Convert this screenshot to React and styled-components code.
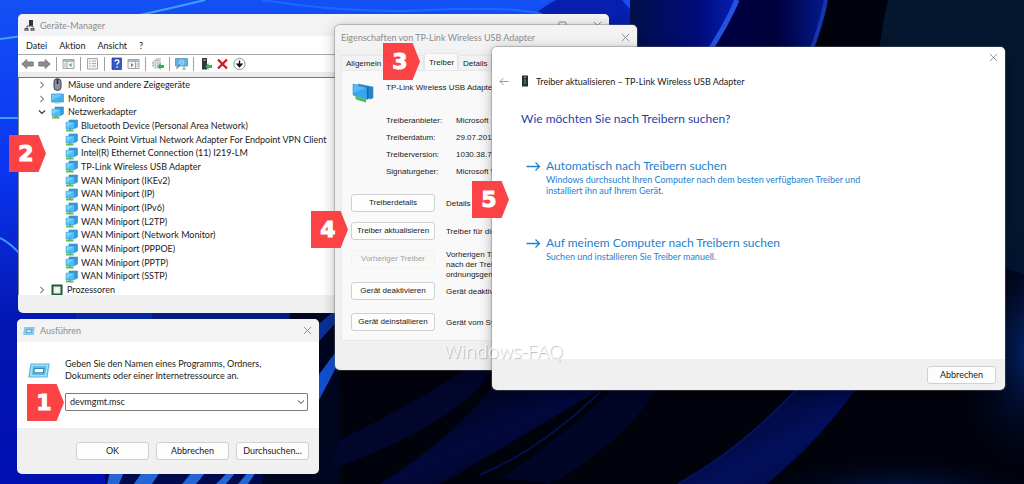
import { useState } from 'react';
import styled, { createGlobalStyle } from 'styled-components';

const GlobalStyle = createGlobalStyle`
  * {
    box-sizing: border-box;
  }
  body {
    margin: 0;
    background: #00041c;
    font-family: Lato, 'Noto Sans', sans-serif;
    font-size: 9px;
    font-variant-ligatures: none;
    color: #1a1a1a;
  }
  button, select {
    font: inherit;
    font-variant-ligatures: none;
    color: inherit;
  }
`;

const ADAPTERS = [
  'Bluetooth Device (Personal Area Network)',
  'Check Point Virtual Network Adapter For Endpoint VPN Client',
  'Intel(R) Ethernet Connection (11) I219-LM',
  'TP-Link Wireless USB Adapter',
  'WAN Miniport (IKEv2)',
  'WAN Miniport (IP)',
  'WAN Miniport (IPv6)',
  'WAN Miniport (L2TP)',
  'WAN Miniport (Network Monitor)',
  'WAN Miniport (PPPOE)',
  'WAN Miniport (PPTP)',
  'WAN Miniport (SSTP)',
];

const DRIVER_FIELDS = [
  ['Treiberanbieter:', 'Microsoft'],
  ['Treiberdatum:', '29.07.2017'],
  ['Treiberversion:', '1030.38.712.2019'],
  ['Signaturgeber:', 'Microsoft Windows'],
];

const DRIVER_ACTIONS = [
  { label: 'Treiberdetails', lines: ['Details'], height: 28 },
  { label: 'Treiber aktualisieren', lines: ['Treiber für dieses Gerät'], height: 28 },
  {
    label: 'Vorheriger Treiber',
    lines: ['Vorherigen Treiber', 'nach der Treiber', 'ordnungsgemäß'],
    height: 32,
    disabled: true,
  },
  { label: 'Gerät deaktivieren', lines: ['Gerät deaktivieren'], height: 31 },
  { label: 'Gerät deinstallieren', lines: ['Gerät vom System'], height: 18 },
];

const SEARCH_OPTIONS = [
  {
    title: 'Automatisch nach Treibern suchen',
    lines: [
      'Windows durchsucht Ihren Computer nach dem besten verfügbaren Treiber und',
      'installiert ihn auf Ihrem Gerät.',
    ],
  },
  {
    title: 'Auf meinem Computer nach Treibern suchen',
    lines: ['Suchen und installieren Sie Treiber manuell.'],
  },
];

const STEPS = [
  { num: 1, left: 27, top: 384 },
  { num: 2, left: 9, top: 135 },
  { num: 3, left: 383, top: 43 },
  { num: 4, left: 311, top: 211 },
  { num: 5, left: 472, top: 181 },
];

/* ---------- icons ---------- */

const NetworkIcon = ({ size = 13 }) => (
  <svg width={size} height={size} viewBox="0 0 13 13" aria-hidden="true">
    <path d="M1 11.500h7.500M5 9v2.500" stroke="#5cba5e" strokeWidth="2" />
    <path d="M4 1h8.500v7L11 9H4z" fill="#2f9be0" stroke="#3f86b8" strokeWidth=".6" />
    <path d="M1 3.200h8.600v6.500H1z" fill="#4dbdf5" stroke="#3a97cd" strokeWidth=".6" />
    <path d="M1.400 3.600h7.800L1.400 8.500z" fill="#8adcff" opacity=".7" />
  </svg>
);

const BigNetworkIcon = () => (
  <svg width="24" height="22" viewBox="0 0 24 22" aria-hidden="true">
    <path d="M4 14l11 3.500v3L5 17.500z" fill="#45c24c" />
    <path d="M7 2l15 3v11l-3 1L7 12z" fill="#1f86cf" stroke="#2b79b5" strokeWidth=".5" />
    <path d="M2 2l14 3.500v12L2 13z" fill="#35a7ec" stroke="#2683bf" strokeWidth=".5" />
    <path d="M2.500 2.800l12 3.200-12 5z" fill="#64c4f8" opacity=".7" />
    <path d="M16 5.500l1.500-.5v11.500l-1.500 1z" fill="#176ba8" />
  </svg>
);

const MonitorIcon = () => (
  <svg width="13" height="11" viewBox="0 0 13 11" aria-hidden="true">
    <path d="M.6 1h11.800v8H.6z" fill="#41b2ef" stroke="#4596c6" strokeWidth=".8" />
    <path d="M1 1.400h11L1 7.500z" fill="#83d5fb" opacity=".6" />
    <path d="M4 10h5" stroke="#9fc3d9" />
  </svg>
);

const MouseIcon = () => (
  <svg width="13" height="13" viewBox="0 0 13 13" aria-hidden="true">
    <rect x="3" y=".8" width="7" height="11.500" rx="3" fill="#8b90a0" stroke="#3c404c" />
    <path d="M6.500 1v5" stroke="#262a35" strokeWidth="1.600" />
  </svg>
);

const ChipIcon = () => (
  <svg width="12" height="12" viewBox="0 0 12 12" aria-hidden="true">
    <rect x="1.500" y="1.500" width="9" height="9" fill="#eef3ee" stroke="#245a38" strokeWidth="2" />
    <rect x="4" y="4" width="4" height="4" fill="#fff" stroke="#d3e0d6" strokeWidth=".6" />
  </svg>
);

const ManagerIcon = () => (
  <svg width="11" height="13" viewBox="0 0 11 13" aria-hidden="true">
    <path d="M5 1h4v6H5z" fill="#333" />
    <path d="M3 7h6v1.500M3 7v2" stroke="#555" fill="none" />
    <path d="M.5 9h4v3h-4zM6.500 9h4v3h-4z" fill="#555" />
    <path d="M1.500 11h2M7.500 11h2" stroke="#ccc" />
  </svg>
);

const UsbIcon = () => (
  <svg width="8" height="12" viewBox="0 0 8 12" aria-hidden="true">
    <path d="M1 .5h6v11H1z" fill="#27302d" />
    <path d="M3 1.500h2v1.500H3z" fill="#7e8a85" />
    <path d="M3 4h2v5H3z" fill="#3b6e4c" />
  </svg>
);

const RunIcon = ({ width = 12 }) => (
  <svg width={width} height={Math.round(width * 0.7)} viewBox="0 0 22 15" aria-hidden="true">
    <path d="M3 1h18l-2 13H1z" fill="#a4dcf6" stroke="#5cb2dc" strokeWidth="1.200" />
    <path d="M5 3h13.500l-1.500 9H4z" fill="#5cbbe8" />
    <path d="M6.500 5.500h9.500l-.8 4.200H5.800z" fill="#fff" stroke="#2e86bd" strokeWidth="1.100" />
  </svg>
);

const CloseIcon = () => (
  <svg width="9" height="9" viewBox="0 0 9 9" aria-hidden="true">
    <path d="M.8.8l7.400 7.400M8.200.8L.8 8.200" stroke="#8a8a8a" strokeWidth=".9" />
  </svg>
);

const SquareIcon = () => (
  <svg width="9" height="9" viewBox="0 0 9 9" aria-hidden="true">
    <rect x="1" y="1" width="7" height="7" rx="1" fill="none" stroke="#8a8a8a" />
  </svg>
);

const ArrowIcon = () => (
  <svg width="15" height="11" viewBox="0 0 15 11" aria-hidden="true">
    <path d="M.5 5.500h13M9.500 1.500l4 4-4 4" fill="none" stroke="#1c83d2" strokeWidth="1.300" />
  </svg>
);

const BackIcon = () => (
  <svg width="10" height="9" viewBox="0 0 10 9" aria-hidden="true">
    <path d="M9.500 4.500H1M4.500 1L1 4.500 4.500 8" fill="none" stroke="#999" />
  </svg>
);

const Chevron = ({ open, light }) => (
  <svg width="8" height="8" viewBox="0 0 8 8" aria-hidden="true">
    <path
      d={open ? 'M1 2.500l3 3 3-3' : 'M2.500 1l3 3-3 3'}
      fill="none"
      stroke={open && !light ? '#333' : '#888'}
      strokeWidth="1.100"
    />
  </svg>
);

const toolShapes = {
  Zurück: (
    <path d="M.8 7l5-4.500V5h6.400v4H5.800v2.500z" fill="#8d8d8d" stroke="#6e6e6e" strokeWidth=".8" />
  ),
  Vorwärts: (
    <path d="M12.200 7l-5-4.500V5H.8v4h6.400v2.500z" fill="#8d8d8d" stroke="#6e6e6e" strokeWidth=".8" />
  ),
  Konsolenstruktur: (
    <>
      <path d="M1 2.500h11v9H1z" fill="#f5f5f5" stroke="#a5a5a5" />
      <path d="M1 4h11" stroke="#9aa4ae" strokeWidth="1.500" />
      <path d="M5 4.500v7" stroke="#a5a5a5" />
      <path d="M9.500 6v4L7 8z" fill="#3ea54a" />
      <path d="M2 7h2M2 9h2" stroke="#b0b0b0" />
    </>
  ),
  Eigenschaften: (
    <>
      <path d="M1.500 1.500h10v10.500h-10z" fill="#f4f4f2" stroke="#a5a5a5" />
      <path d="M3 4h1.500M3 6.500h1.500M3 9h1.500M6 4h4M6 6.500h4M6 9h4" stroke="#a3aca5" />
    </>
  ),
  Hilfe: (
    <>
      <path d="M2 1h9.500v11.500H2z" fill="#3558c4" stroke="#22358e" strokeWidth=".7" />
      <path d="M5 4.500c0-2 4-2 4 0 0 1.500-2 1.400-2 3.200M7 9.200v1.500" fill="none" stroke="#fff" strokeWidth="1.300" />
    </>
  ),
  Aktionsbereich: (
    <>
      <path d="M1 2.500h11v9H1z" fill="#f5f5f5" stroke="#a5a5a5" />
      <path d="M1 4h11" stroke="#9aa4ae" strokeWidth="1.500" />
      <path d="M8.500 4.500v7" stroke="#a5a5a5" />
      <path d="M4 6v4l2.500-2z" fill="#3ea54a" />
      <path d="M9.500 7h2M9.500 9h2" stroke="#b0b0b0" />
    </>
  ),
  Aktualisieren: (
    <>
      <path d="M5 1h5v3H5z" fill="#d4d4d4" />
      <circle cx="5.500" cy="7" r="3.800" fill="#e9e9e9" stroke="#adadad" strokeWidth="1.500" strokeDasharray="2 1" />
      <circle cx="5.500" cy="7" r="1.500" fill="#fff" stroke="#aaa" />
      <path d="M6.500 9.500l3-3.500v2H13v3H9.500v2z" fill="#2fb45a" />
    </>
  ),
  Gerätesuche: (
    <>
      <path d="M.5 1.500h12v7.500H.5z" fill="#58b4e6" stroke="#6f9fba" />
      <path d="M7 12h4M9 9v3" stroke="#8b98a1" />
      <circle cx="6.500" cy="5.500" r="2.500" fill="#7cc8f0" stroke="#9dd4f1" />
      <path d="M5 7.500l-3.500 4" stroke="#77838b" strokeWidth="1.300" />
    </>
  ),
  Treiber: (
    <>
      <path d="M3 1h5v11.500H3z" fill="#333a38" />
      <path d="M4.500 2h2v2h-2z" fill="#8d9693" />
      <path d="M6.500 9.500l3-3.500v2H13v3H9.500v2z" fill="#2fb45a" />
    </>
  ),
  Deinstallieren: <path d="M2 2.500l9 9M11 2.500l-9 9" stroke="#d61420" strokeWidth="2.300" />,
  Deaktivieren: (
    <>
      <circle cx="6.500" cy="7" r="5.600" fill="#fff" stroke="#777" strokeWidth=".8" />
      <path d="M6.500 3.500v6M4.300 7.300l2.200 2.400 2.200-2.400z" stroke="#111" strokeWidth="1.400" fill="#111" />
    </>
  ),
};

const TOOL_GROUPS = [
  ['Zurück', 'Vorwärts'],
  ['Konsolenstruktur'],
  ['Eigenschaften'],
  ['Hilfe', 'Aktionsbereich'],
  ['Aktualisieren'],
  ['Gerätesuche'],
  ['Treiber', 'Deinstallieren', 'Deaktivieren'],
];

const Wallpaper = () => (
  <WallpaperSvg viewBox="0 0 1024 484" preserveAspectRatio="none" aria-hidden="true">
    <defs>
      <linearGradient id="sky" x1="0" y1="0" x2="0" y2="1">
        <stop offset="0" stopColor="#1450f4" />
        <stop offset=".35" stopColor="#0a35f0" />
        <stop offset=".68" stopColor="#0316ae" />
        <stop offset="1" stopColor="#0010b4" />
      </linearGradient>
      <linearGradient id="petal" x1="0" y1="0" x2="1" y2="0">
        <stop offset="0" stopColor="#00104a" />
        <stop offset=".6" stopColor="#000a78" />
        <stop offset="1" stopColor="#0620b4" />
      </linearGradient>
      <linearGradient id="petalDark" x1="0" y1="0" x2="1" y2="0">
        <stop offset="0" stopColor="#000048" />
        <stop offset=".6" stopColor="#00003c" />
        <stop offset="1" stopColor="#041a90" />
      </linearGradient>
      <linearGradient id="band" x1="0" y1="0" x2="1" y2="1">
        <stop offset="0" stopColor="#00020f" />
        <stop offset=".5" stopColor="#02083c" />
        <stop offset="1" stopColor="#00020c" />
      </linearGradient>
      <linearGradient id="bandBlue" x1="0" y1="0" x2="1" y2="1">
        <stop offset="0" stopColor="#000210" />
        <stop offset=".6" stopColor="#020f5c" />
        <stop offset="1" stopColor="#010a38" />
      </linearGradient>
      <radialGradient id="glow">
        <stop offset="0" stopColor="#052468" />
        <stop offset="1" stopColor="#00041c" stopOpacity="0" />
      </radialGradient>
    </defs>
    <path d="M0 0h1024v484H0z" fill="#00020c" />
    <path d="M0 0h630v200H330v284H0z" fill="url(#sky)" />
    <path d="M535 14Q575-20 622 0l12 14v30H535z" fill="#061fae" />
    <path d="M630 0h109L700 70h-70z" fill="url(#petal)" />
    <path d="M739 0h88l-25 70H700z" fill="url(#petalDark)" />
    <path d="M737 0Q726 26 706 56" stroke="#2452e0" strokeWidth="5" fill="none" />
    <path d="M826 0Q821 26 809 56" stroke="#1534b4" strokeWidth="4" fill="none" />
    <path d="M888 0Q882 24 878 60L1005 160V268l19 6V0z" fill="#04172f" />
    <ellipse cx="1030" cy="350" rx="80" ry="130" fill="url(#glow)" />
    <ellipse cx="900" cy="500" rx="150" ry="45" fill="url(#glow)" />
    <path d="M0 39Q90 28 205 0" stroke="#40a0ff" strokeWidth="2" fill="none" />
    <path d="M262 0Q350 14 430 10T542 14" stroke="#1d68ff" strokeWidth="2" fill="none" />
    <path d="M0 118h18" stroke="#3e9cff" strokeWidth="2" />
    <path d="M0 238Q14 245 26 262" stroke="#389bff" strokeWidth="2" fill="none" />
    <path d="M76 313h76v8H76z" fill="#0628a4" />
    <path d="M152 313h140v8H152z" fill="#031c80" />
    <path d="M105 470h225v14H105z" fill="#010a4c" />
    <path
      d="M107 484l3-12h14l-5 12zM134 484l8-12h18l-8 12zM182 484l10-12h14l-10 12zM216 484l12-12h8l-10 12zM238 484l10-12h8l-8 12z"
      fill="#2465d8"
    />
    <path d="M290 313h50v171H262z" fill="#010620" />
    <path d="M300 340l40-34v12l-36 40z" fill="#0b2f96" />
    <path d="M312 384L340 346v14L318 402z" fill="#124fcf" />
    <path d="M340 440Q420 400 480 360h18Q470 420 330 470z" fill="#01062a" />
    <path d="M380 484Q450 440 492 388h110Q500 450 440 484z" fill="url(#band)" />
    <path d="M480 475Q540 450 600 392" stroke="#050f4c" strokeWidth="2" fill="none" />
    <path d="M550 484Q620 446 660 386h-44Q560 440 500 478z" fill="#010526" />
    <path d="M678 484Q740 450 800 386h58Q820 440 767 484z" fill="url(#bandBlue)" />
    <path d="M678 484Q740 450 800 386" stroke="#07125c" strokeWidth="2" fill="none" />
  </WallpaperSvg>
);

/* ---------- windows ---------- */

const DeviceManager = () => (
  <Window $left={18} $right={415} $top={14}>
    <TitleBar $height={22}>
      <ManagerIcon />
      <WindowTitle>Geräte-Manager</WindowTitle>
      <WindowControls>
        <IconButton aria-label="Maximieren">
          <SquareIcon />
        </IconButton>
        <IconButton aria-label="Schließen">
          <CloseIcon />
        </IconButton>
      </WindowControls>
    </TitleBar>
    <MenuBar>
      {['Datei', 'Aktion', 'Ansicht', '?'].map((item) => (
        <MenuItem key={item}>{item}</MenuItem>
      ))}
    </MenuBar>
    <Toolbar>
      {TOOL_GROUPS.map((group, idx) => (
        <ToolGroup key={idx}>
          {group.map((name) => (
            <IconButton key={name} aria-label={name}>
              <svg width="13" height="14" viewBox="0 0 13 14" aria-hidden="true">
                {toolShapes[name]}
              </svg>
            </IconButton>
          ))}
        </ToolGroup>
      ))}
    </Toolbar>
    <TreePane>
      <Tree>
        <TreeRow>
          <Chevron />
          <MouseIcon />
          Mäuse und andere Zeigegeräte
        </TreeRow>
        <TreeRow>
          <Chevron />
          <MonitorIcon />
          Monitore
        </TreeRow>
        <TreeRow>
          <Chevron open />
          <NetworkIcon />
          Netzwerkadapter
        </TreeRow>
        {ADAPTERS.map((name) => (
          <TreeRow key={name} $child>
            <NetworkIcon />
            {name}
          </TreeRow>
        ))}
        <TreeRow>
          <Chevron />
          <ChipIcon />
          Prozessoren
        </TreeRow>
      </Tree>
    </TreePane>
    <StatusBar />
  </Window>
);

const RunDialog = () => {
  const [command, setCommand] = useState('devmgmt.msc');

  return (
    <Window $left={17} $right={705} $top={319}>
      <TitleBar $height={23}>
        <RunIcon />
        <WindowTitle>Ausführen</WindowTitle>
        <WindowControls>
          <IconButton aria-label="Schließen">
            <CloseIcon />
          </IconButton>
        </WindowControls>
      </TitleBar>
      <RunBody>
        <RunIcon width={22} />
        <RunForm>
          <label htmlFor="command">
            Geben Sie den Namen eines Programms, Ordners,
            <br />
            Dokuments oder einer Internetressource an.
          </label>
          <SelectWrap>
            <CommandSelect id="command" value={command} onChange={(e) => setCommand(e.target.value)}>
              <option>devmgmt.msc</option>
            </CommandSelect>
            <Chevron open light />
          </SelectWrap>
        </RunForm>
      </RunBody>
      <RunFooter>
        {['OK', 'Abbrechen', 'Durchsuchen...'].map((label) => (
          <PushButton key={label} $width={73}>
            {label}
          </PushButton>
        ))}
      </RunFooter>
    </Window>
  );
};

const PropertiesDialog = () => (
  <Window $left={335} $right={387} $top={25} $shadow>
    <TitleBar $height={24} $plain>
      <WindowTitle>Eigenschaften von TP-Link Wireless USB Adapter</WindowTitle>
      <WindowControls>
        <IconButton aria-label="Schließen">
          <CloseIcon />
        </IconButton>
      </WindowControls>
    </TitleBar>
    <Classic>
      <TabList role="tablist">
        <Tab role="tab" $wide>
          Allgemein
        </Tab>
        <Tab role="tab" $active aria-selected="true">
          Treiber
        </Tab>
        <Tab role="tab">Details</Tab>
      </TabList>
      <TabPanel role="tabpanel">
        <DeviceHead>
          <BigNetworkIcon />
          TP-Link Wireless USB Adapter
        </DeviceHead>
        <FieldList>
          {DRIVER_FIELDS.map(([name, value]) => (
            <Field key={name}>
              <dt>{name}</dt>
              <dd>{value}</dd>
            </Field>
          ))}
        </FieldList>
        {DRIVER_ACTIONS.map((action) => (
          <ActionRow key={action.label} $height={action.height}>
            <PushButton $width={84} disabled={action.disabled}>
              {action.label}
            </PushButton>
            <ActionText $multi={action.lines.length > 1}>
              {action.lines.map((line) => (
                <span key={line}>{line}</span>
              ))}
            </ActionText>
          </ActionRow>
        ))}
      </TabPanel>
    </Classic>
  </Window>
);

const UpdateDialog = () => (
  <Window $left={492} $right={19} $top={47} $shadow>
    <WizardBody>
      <WizardTop>
        <IconButton aria-label="Schließen">
          <CloseIcon />
        </IconButton>
      </WizardTop>
      <WizardHeader>
        <IconButton aria-label="Zurück">
          <BackIcon />
        </IconButton>
        <UsbIcon />
        <span>Treiber aktualisieren – TP-Link Wireless USB Adapter</span>
      </WizardHeader>
      <Question>Wie möchten Sie nach Treibern suchen?</Question>
      <Options>
        {SEARCH_OPTIONS.map((option) => (
          <Option key={option.title}>
            <ArrowIcon />
            <span>
              <OptionTitle>{option.title}</OptionTitle>
              {option.lines.map((line) => (
                <OptionLine key={line}>{line}</OptionLine>
              ))}
            </span>
          </Option>
        ))}
      </Options>
    </WizardBody>
    <WizardFooter>
      <PushButton $width={69}>Abbrechen</PushButton>
    </WizardFooter>
  </Window>
);

const App = () => {
  return (
    <>
      <GlobalStyle />
      <Desktop>
        <Wallpaper />
        <DeviceManager />
        <RunDialog />
        <PropertiesDialog />
        <UpdateDialog />
        <Watermark>Windows-FAQ</Watermark>
        {STEPS.map((step) => (
          <StepBadge key={step.num} $left={step.left} $top={step.top}>
            {step.num}
          </StepBadge>
        ))}
      </Desktop>
    </>
  );
};

export default App;

const Desktop = styled.main`
  position: relative;
  min-height: 100vh;
  overflow: hidden;
`;

const WallpaperSvg = styled.svg`
  position: absolute;
  inset: 0;
  width: 100%;
  height: 100%;
`;

const Window = styled.section`
  position: absolute;
  left: ${({ $left }) => $left}px;
  right: ${({ $right }) => $right}px;
  top: ${({ $top }) => $top}px;
  overflow: hidden;
  border-radius: 5px;
  background-color: #f0f0f0;
  white-space: nowrap;
  box-shadow: ${({ $shadow }) =>
    $shadow ? '0 0 1px 1px rgba(110, 110, 110, 0.4), 0 3px 14px rgba(0, 0, 0, 0.3)' : '0 0 1px rgba(60, 60, 60, 0.6)'};
`;

const TitleBar = styled.header`
  display: flex;
  align-items: center;
  gap: ${({ $plain }) => ($plain ? 0 : 5)}px;
  height: ${({ $height }) => $height}px;
  padding: 0 7px 0 6px;
  background-color: #f3f3f3;
`;

const WindowTitle = styled.h2`
  margin: 0;
  font-size: 9px;
  font-weight: 400;
  color: #8c8c8c;
`;

const WindowControls = styled.div`
  display: flex;
  gap: 26px;
  margin-left: auto;
`;

const IconButton = styled.button`
  display: flex;
  align-items: center;
  justify-content: center;
  padding: 0;
  border: 0;
  background: none;
`;

const MenuBar = styled.nav`
  display: flex;
  align-items: center;
  gap: 12px;
  height: 18px;
  padding: 0 8px;
  background-color: #fff;
`;

const MenuItem = styled.button`
  padding: 0;
  border: 0;
  background: none;
`;

const Toolbar = styled.div`
  display: flex;
  align-items: center;
  height: 24px;
  padding: 0 3px 5px;
  border-top: 1px solid #a8a8a8;
  border-bottom: 1px solid #777;
  background: linear-gradient(#fff 17px, #ececec 17px);
`;

const ToolGroup = styled.div`
  display: flex;
  gap: 4px;

  & + & {
    margin-left: 5px;
    padding-left: 5px;
    border-left: 1px solid #a0a0a0;
  }
`;

const TreePane = styled.div`
  height: 217px;
  overflow: hidden;
  border-left: 1px solid #888;
  background-color: #fff;
`;

const Tree = styled.ul`
  display: grid;
  grid-auto-rows: 1fr;
  height: 219px;
  margin: 0;
  padding: 0;
  list-style: none;
  line-height: 10px;
`;

const TreeRow = styled.li`
  display: flex;
  align-items: center;
  gap: ${({ $child }) => ($child ? 3 : 4)}px;
  padding-left: ${({ $child }) => ($child ? 46 : 19)}px;

  & > svg:first-child {
    margin-right: ${({ $child }) => ($child ? 0 : 1)}px;
  }
`;

const StatusBar = styled.footer`
  height: 18px;
`;

const RunBody = styled.div`
  display: flex;
  gap: 15px;
  padding: 16px 11px 17px;
  background-color: #fff;

  & > svg {
    margin-top: 5px;
  }
`;

const RunForm = styled.form`
  flex: 1;
  line-height: 12px;
`;

const SelectWrap = styled.div`
  display: grid;
  align-items: center;
  margin-top: 11px;

  & > * {
    grid-area: 1 / 1;
  }
  & > svg {
    justify-self: end;
    margin-right: 3px;
    pointer-events: none;
  }
`;

const CommandSelect = styled.select`
  appearance: none;
  width: 100%;
  height: 18px;
  padding: 0 4px;
  border: 1px solid #7d7d7d;
  border-radius: 1px;
  background-color: #fff;
`;

const RunFooter = styled.footer`
  display: flex;
  justify-content: flex-end;
  gap: 7px;
  padding: 14px 10px;
`;

const PushButton = styled.button`
  width: ${({ $width }) => $width}px;
  height: 18px;
  flex: none;
  padding: 0;
  border: 1px solid #d0d0d0;
  border-radius: 3px;
  background-color: #fdfdfd;
  line-height: 16px;

  &:disabled {
    border-color: #f3f3f3;
    background-color: #f8f8f8;
    color: #a0a0a0;
  }
`;

const Classic = styled.div`
  padding: 4px 6px 29px;
  font-family: 'Liberation Sans', sans-serif;
  font-size: 8px;
`;

const TabList = styled.div`
  display: flex;
  align-items: flex-end;
`;

const Tab = styled.button`
  width: ${({ $wide }) => ($wide ? 83 : 34)}px;
  height: ${({ $active }) => ($active ? 17 : 15)}px;
  padding: 0 4px;
  border: 1px solid #e6e6e6;
  border-bottom: 0;
  background-color: ${({ $active }) => ($active ? '#fafafa' : '#f2f2f2')};
  text-align: left;
`;

const TabPanel = styled.div`
  padding: 11px 9px 9px;
  border: 1px solid #e8e8e8;
  background-color: #f9f9f9;
`;

const DeviceHead = styled.div`
  display: flex;
  gap: 11px;
  line-height: 11px;
`;

const FieldList = styled.dl`
  margin: 8px 0 14px 35px;
`;

const Field = styled.div`
  display: flex;
  line-height: 17px;

  dt {
    width: 70px;
  }
  dd {
    margin: 0;
  }
`;

const ActionRow = styled.div`
  display: flex;
  align-items: flex-start;
  gap: 11px;
  min-height: ${({ $height }) => $height}px;
`;

const ActionText = styled.p`
  display: flex;
  flex-direction: column;
  margin: 0;
  padding-top: ${({ $multi }) => ($multi ? 0 : 5)}px;
  line-height: 10px;
`;

const WizardBody = styled.div`
  padding: 6px 7px 0;
  min-height: 312px;
  background-color: #fff;
`;

const WizardTop = styled.div`
  display: flex;
  justify-content: flex-end;
`;

const WizardHeader = styled.div`
  display: flex;
  align-items: center;
  gap: 7px;
  margin-top: 13px;

  & > svg {
    margin-left: 5px;
  }
`;

const Question = styled.h1`
  margin: 23px 22px 0;
  font-size: 12px;
  font-weight: 400;
  line-height: 18px;
  color: #1f3fa8;
`;

const Options = styled.div`
  display: grid;
  gap: 39px;
  margin: 30px 27px 0;
`;

const Option = styled.button`
  display: flex;
  align-items: flex-start;
  gap: 5px;
  padding: 0;
  border: 0;
  background: none;
  text-align: left;
  color: #1c7fd0;

  & > svg {
    margin-top: 3px;
  }
`;

const OptionTitle = styled.span`
  display: block;
  font-size: 12px;
  line-height: 16px;
`;

const OptionLine = styled.span`
  display: block;
  line-height: 11px;
`;

const WizardFooter = styled.footer`
  display: flex;
  justify-content: flex-end;
  padding: 7px 9px 6px;
`;

const Watermark = styled.div`
  position: absolute;
  left: 444px;
  top: 338px;
  font-family: 'Open Sans', sans-serif;
  font-size: 19px;
  font-weight: 300;
  line-height: 26px;
  color: #fff;
  text-shadow: 1px 1px 1px rgba(0, 0, 0, 0.3);
`;

const StepBadge = styled.div`
  position: absolute;
  left: ${({ $left }) => $left}px;
  top: ${({ $top }) => $top}px;
  display: flex;
  align-items: center;
  justify-content: center;
  width: 37px;
  height: 37px;
  padding-right: 3px;
  background-color: #fb4245;
  clip-path: polygon(0 0, 80% 0, 100% 50%, 80% 100%, 0 100%);
  font-family: 'DejaVu Sans', sans-serif;
  font-size: 22px;
  font-weight: 700;
  color: #fff;
  -webkit-text-stroke: 1px #fff;
`;
